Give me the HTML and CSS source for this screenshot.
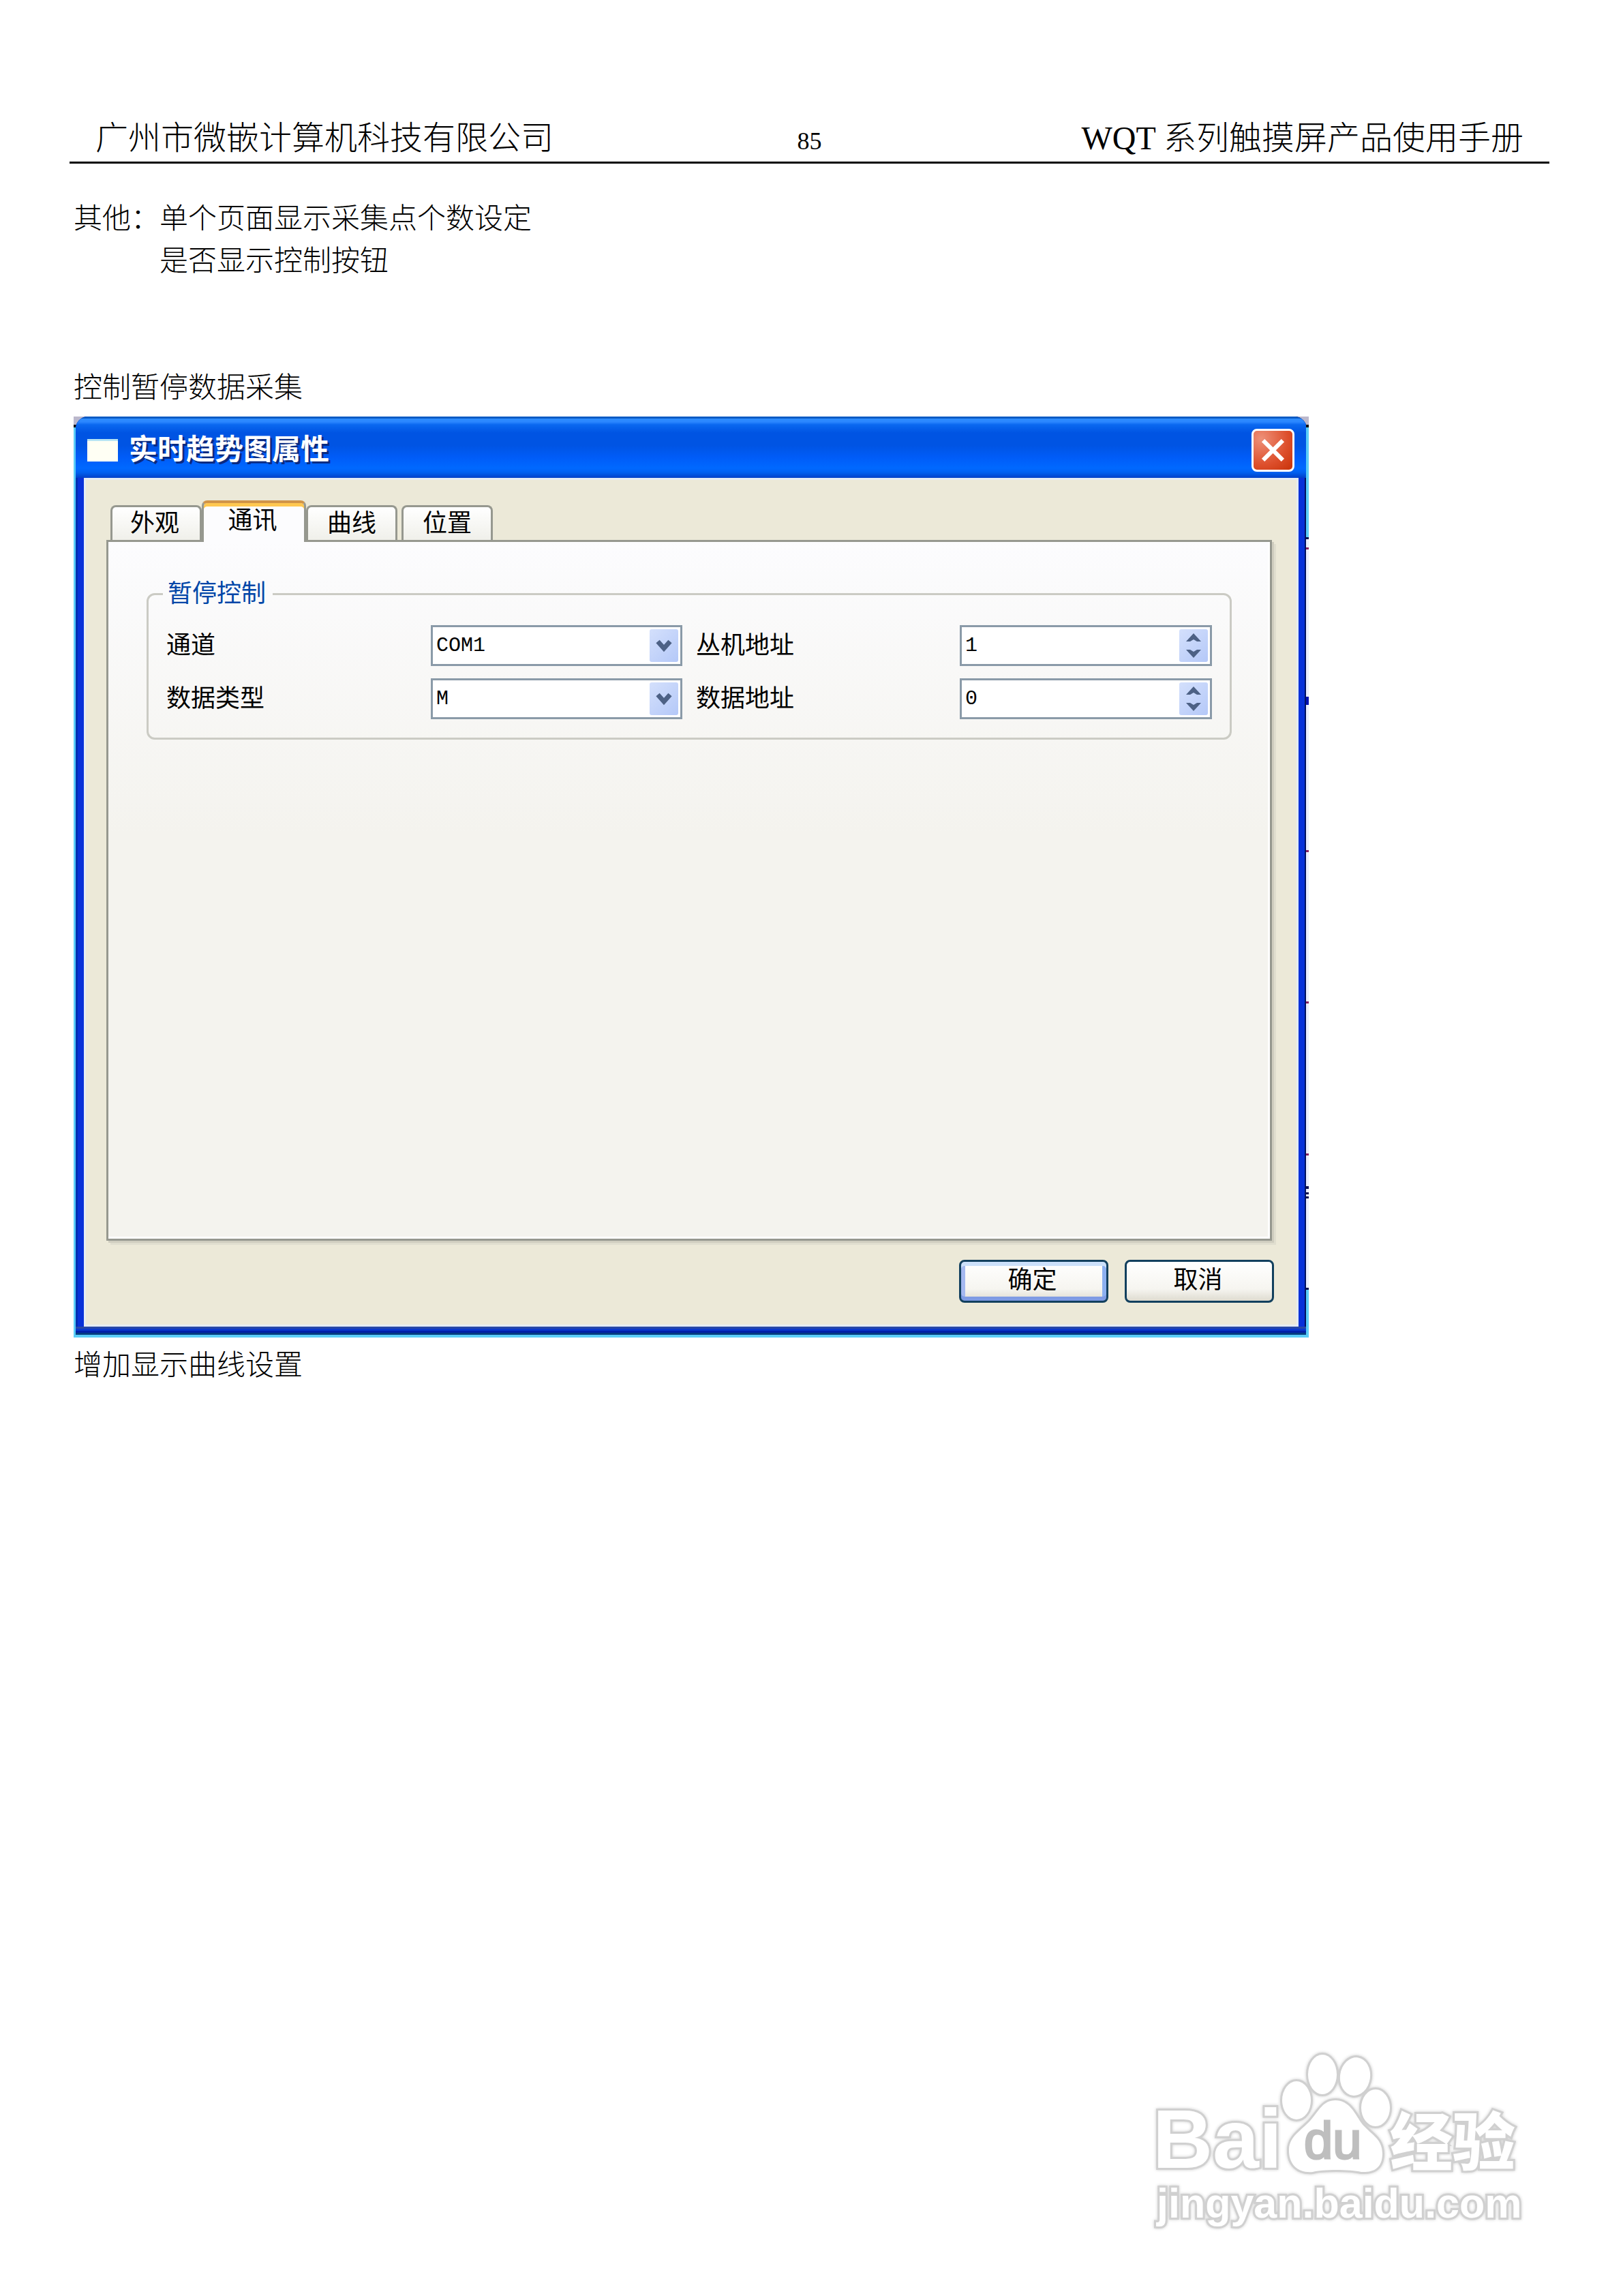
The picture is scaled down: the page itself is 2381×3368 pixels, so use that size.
FILE: index.html
```
<!DOCTYPE html>
<html lang="zh-CN">
<head>
  <meta charset="UTF-8"><meta name="viewport" content="width=device-width,initial-scale=1">
  <title>WQT 系列触摸屏产品使用手册</title>
  <link rel="stylesheet" href="styles.css">
</head>
<body>
  <div class="page">
    <header class="page-head">
      <span class="company">广州市微嵌计算机科技有限公司</span>
      <span class="page-no">85</span>
      <span class="manual">WQT 系列触摸屏产品使用手册</span>
    </header>

    <main class="content">
      <div class="note">
        <span>其他：</span>
        <div>
          <p>单个页面显示采集点个数设定</p>
          <p>是否显示控制按钮</p>
        </div>
      </div>
      <p>控制暂停数据采集</p>

      <section class="dialog">
        <!-- bits of the window behind, along the right edge -->
        <svg class="behind" viewBox="0 0 4 1351" preserveAspectRatio="none" aria-hidden="true">
          <rect width="4" height="12" fill="#bbb8cc"/>
          <rect y="12" width="4" height="4" fill="#111"/>
          <rect y="16" width="4" height="162" fill="#5bcdf8"/>
          <rect y="178" width="4" height="1103" fill="#eceeff"/>
          <path d="M0 177h4v3H0zM0 1129h4v4H0zM0 1138h4v3H0zM0 1144h4v3H0zM0 1278h4v3H0z" fill="#101050"/>
          <path d="M0 411h4v12H0z" fill="#0010b0"/>
          <path d="M0 192h4v3H0zM0 636h4v3H0zM0 858h4v3H0zM0 1081h4v3H0z" fill="#8c2060"/>
          <rect y="1281" width="4" height="70" fill="#5bcdf8"/>
        </svg>
        <div class="window">
          <div class="title-bar">
            <span class="win-icon"></span>
            <h1>实时趋势图属性</h1>
            <button class="close" type="button" aria-label="关闭">
              <svg viewBox="0 0 34 34"><path d="M3 3 31 31M31 3 3 31" stroke="#fff" stroke-width="6"/></svg>
            </button>
          </div>
          <div class="win-body">
            <div class="tabs" role="tablist">
              <button type="button" role="tab">外观</button>
              <button type="button" role="tab" class="active" aria-selected="true">通讯</button>
              <button type="button" role="tab">曲线</button>
              <button type="button" role="tab">位置</button>
            </div>
            <div class="panel">
              <fieldset>
                <legend>暂停控制</legend>
                <div class="fields">
                  <label for="channel">通道</label>
                  <div class="field combo">
                    <select id="channel"><option>COM1</option></select>
                    <svg class="arrow" viewBox="0 0 42 48"><path d="M12 18 21 28 30 18" fill="none" stroke="#4d6185" stroke-width="7"/></svg>
                  </div>
                  <label for="station">丛机地址</label>
                  <div class="field">
                    <input id="station" type="text" value="1">
                    <svg class="arrow" viewBox="0 0 42 48"><path d="M10 18 21 6 32 18 26 18 21 15 16 18ZM10 30 21 42 32 30 26 30 21 33 16 30Z" fill="#4d6185"/></svg>
                  </div>
                  <label for="type">数据类型</label>
                  <div class="field combo">
                    <select id="type"><option>M</option></select>
                    <svg class="arrow" viewBox="0 0 42 48"><path d="M12 18 21 28 30 18" fill="none" stroke="#4d6185" stroke-width="7"/></svg>
                  </div>
                  <label for="address">数据地址</label>
                  <div class="field">
                    <input id="address" type="text" value="0">
                    <svg class="arrow" viewBox="0 0 42 48"><path d="M10 18 21 6 32 18 26 18 21 15 16 18ZM10 30 21 42 32 30 26 30 21 33 16 30Z" fill="#4d6185"/></svg>
                  </div>
                </div>
              </fieldset>
            </div>
            <div class="actions">
              <button type="button" class="default">确定</button>
              <button type="button">取消</button>
            </div>
          </div>
        </div>
      </section>

      <p>增加显示曲线设置</p>
    </main>

    <footer class="watermark">
      <svg viewBox="0 0 556 264">
        <g class="outline">
          <text x="0" y="172" class="bai">Bai</text>
          <ellipse cx="211" cy="73" rx="21" ry="28"/>
          <ellipse cx="249" cy="35" rx="21" ry="29"/>
          <ellipse cx="297" cy="38" rx="22" ry="28" transform="rotate(8 297 38)"/>
          <ellipse cx="327" cy="84" rx="21" ry="27"/>
          <path d="M268 73C288 73 296 91 306 106C318 122 337 128 337 151C337 174 322 179 306 178C290 174 248 174 235 178C214 180 199 168 200 144C201 126 218 117 231 103C244 88 250 73 268 73Z"/>
          <text x="348" y="168" class="cn">经验</text>
          <text x="6" y="245" class="url">jingyan.baidu.com</text>
        </g>
        <text x="222" y="158" class="du">du</text>
      </svg>
    </footer>
  </div>
</body>
</html>
```
FILE: styles.css
```
:root {
  --serif: "Liberation Serif", "Noto Sans CJK SC", serif;
  --sans: "Liberation Sans", "Noto Sans CJK SC", sans-serif;
  --mono: "Liberation Mono", "Noto Sans CJK SC", monospace;
  --face: #ece9d8;
}
* { box-sizing: border-box; }
body {
  margin: 0;
  background: #fff; color: #000;
  font-family: var(--serif);
  font-weight: 300;
}
p { margin: 0; }
.page {
  min-height: 100vh;
  padding: 167px 108px 96px 102px;
  display: flex; flex-direction: column;
}
.page-head {
  display: grid; grid-template-columns: 1fr auto 1fr;
  align-items: baseline;
  height: 73px; padding: 0 38px;
  border-bottom: 3px solid #000;
  font-size: 48px; line-height: 72px;
}
.page-no { font-size: 36px; }
.manual { text-align: right; }
.content {
  padding: 50px 6px 0;
  font-size: 42px; line-height: 62px;
}
.note { display: flex; margin-bottom: 124px; }

/* XP style dialog */
.dialog {
  position: relative;
  width: 84%; max-width: 1812px;
  margin: 11px 0 10px;
  padding: 0 3px 4px;
  background: linear-gradient(#bbb8cc 12px, #111 12px, #111 16px, #5bcdf8 16px);
  font-family: var(--sans);
  font-size: 36px; line-height: 48px; font-weight: 400;
}
.behind { position: absolute; right: 0; top: 0; width: 4px; height: 100%; }
.window {
  border-radius: 18px 18px 0 0;
  background: #0831d9;
  box-shadow: inset 3px 0 #0030b0, inset -3px 0 #001060;
  overflow: hidden;
}
.window::after {
  content: ''; display: block; height: 12px;
  background: linear-gradient(#2848a8 3px, #0a38cc 3px, #0a38cc 6px, #0020a8 6px, #0020a8 9px, #043c80 9px);
}
.title-bar {
  display: flex; align-items: center; gap: 16px;
  height: 90px; padding: 8px 18px 0 17px;
  background: linear-gradient(#0a5bc4 0, #0a5bc4 3px, #2f8dff 3px, #2a86ff 8px, #0a68f0 12px, #0054e3 24px, #0054e3 42px, #005cf8 60px, #0069ff 76px, #0060f0 82px, #0040c8 90px);
}
.win-icon { width: 45px; height: 33px; background: #fffff4; border-top: 3px solid #b8e4f4; }
.title-bar h1 {
  flex: 1; margin: 0;
  color: #fff; font-size: 42px; line-height: 48px; font-weight: 700;
  text-shadow: 3px 3px #0a2a80;
}
.close {
  width: 63px; height: 63px; padding: 11px;
  border: 3px solid #fff; border-radius: 8px;
  background: radial-gradient(circle at 20% 20%, #ee9078, #dd4f2c 60%, #c83208);
}
.close svg { display: block; width: 100%; }
.win-body {
  margin: 0 12px; padding: 33px 36px 35px 33px;
  background: var(--face);
  box-shadow: inset 0 0 0 3px #e4ecf4;
}
.tabs { display: flex; align-items: flex-end; padding-left: 6px; }
.tabs button {
  width: 134px; height: 51px; padding: 0 4px 0 0;
  border: 3px solid #96988f; border-bottom: 0; border-radius: 8px 8px 0 0;
  background: linear-gradient(#fff, #f0f0ea);
  color: #000; font: inherit;
}
.tabs button + button:not(.active) { margin-left: 6px; padding: 0; }
.tabs .active {
  z-index: 1;
  width: 153px; height: 61px; margin: 0 0 -3px; padding-bottom: 6px;
  border-top: 4px solid #d09448;
  background: #fcfcfe;
  box-shadow: inset 0 5px #ffc850;
}
.tabs .active + button:not(.active) { margin-left: 0; }
.panel {
  height: 1028px; margin-right: 3px; padding: 52px 56px 0;
  border: 3px solid #96988f;
  background: linear-gradient(#fcfcfe, #f4f3ee 42%);
  box-shadow: inset -3px -3px #fff, 3px 3px #cfcdbf, 6px 6px #e0decf;
}
fieldset {
  min-width: 0; margin: 0; padding: 22px 26px 27px;
  border: 3px solid #cbcbc4; border-radius: 12px;
}
legend { margin-left: -5px; padding: 0 10px 0 7px; color: #0046a8; line-height: 48px; }
.fields {
  display: grid; grid-template-columns: 387fr 388fr 386fr 369fr;
  gap: 18px 0; align-items: center;
}
.field { position: relative; }
.combo { padding-right: 20px; }
.field select, .field input {
  display: block; width: 100%; height: 60px;
  padding: 0 50px 0 5px;
  appearance: none;
  border: 3px solid #8a9aa8; border-radius: 0;
  background: #fff; color: #000;
  font-family: var(--mono); font-size: 30px;
}
.arrow {
  position: absolute; right: 6px; top: 6px;
  width: 42px; height: 48px;
  background: linear-gradient(135deg, #d4e0fc, #b4c8f8);
  border-radius: 3px;
  pointer-events: none;
}
.combo .arrow { right: 26px; }
.actions { display: flex; justify-content: flex-end; gap: 24px; padding-top: 28px; }
.actions button {
  width: 219px; height: 63px; padding: 0 4px 4px 0;
  border: 3px solid #12405e; border-radius: 8px;
  background: linear-gradient(#fff, #f6f5f0 70%, #dedbd0);
  color: #000; font: inherit;
}
.actions .default { box-shadow: inset 0 6px #cce0fa, inset 0 -6px #7f9be4, inset 6px 0 #a4b8f0, inset -6px 0 #8cb0f0; }

.watermark { align-self: flex-end; margin-top: auto; padding-right: 26px; }
.watermark svg { display: block; width: 556px; height: 264px; overflow: visible; }
.outline { fill: #fff; stroke: #d0d0d0; stroke-width: 6px; paint-order: stroke; filter: drop-shadow(0 0 2px #ccc); }
.watermark text { font-family: var(--sans); font-weight: 700; }
.bai { font-size: 122px; }
.watermark .du { font-size: 76px; font-weight: 400; fill: #bebebe; stroke: #bebebe; stroke-width: 3px; }
.watermark .cn { font-size: 92px; font-weight: 900; }
.url { font-size: 61px; }
```
